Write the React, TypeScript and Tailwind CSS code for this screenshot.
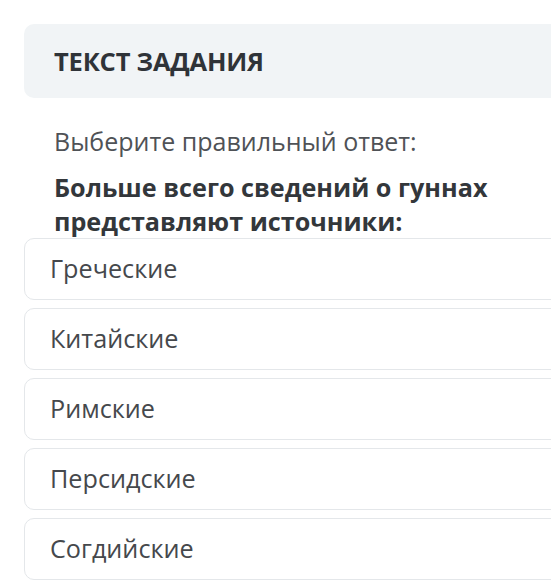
import React from 'react';

const options = ['Греческие', 'Китайские', 'Римские', 'Персидские', 'Согдийские'];

const App: React.FC = () => {
  return (
    <div
      className="w-[551px] h-[588px] overflow-hidden bg-white pt-[24px] pl-[24px]"
      style={{ fontFamily: '"Open Sans", "Noto Sans", sans-serif' }}
    >
      <div className="w-[560px]">
        {/* Header */}
        <div className="h-[74px] rounded-[10px] bg-[#f1f4f6] flex items-center pl-[30px]">
          <h1 className="text-[25.5px] font-bold text-[#2f3338] tracking-[-0.2px]">ТЕКСТ ЗАДАНИЯ</h1>
        </div>

        {/* Question */}
        <div className="pl-[30px] pt-[26px]">
          <p className="text-[25px] leading-[34px] text-[#4f5256]">Выберите правильный ответ:</p>
          <p className="mt-[12px] text-[25.2px] leading-[34px] font-bold text-[#33373b]">
            Больше всего сведений о гуннах
            <br />
            представляют источники:
          </p>
        </div>

        {/* Options */}
        <div className="flex flex-col gap-[8px]">
          {options.map((o) => (
            <div
              key={o}
              className="h-[62px] rounded-[10px] border border-[#e4e7ea] flex items-center pl-[25px]"
            >
              <span className="text-[25.2px] text-[#45484c]">{o}</span>
            </div>
          ))}
        </div>
      </div>
    </div>
  );
};

export default App;
